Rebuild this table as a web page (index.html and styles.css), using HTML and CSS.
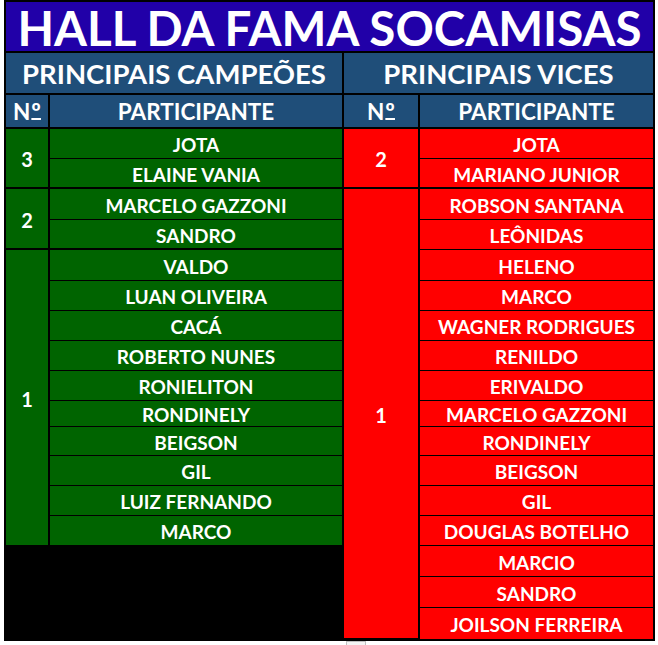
FILE: index.html
```html
<!DOCTYPE html>
<html lang="pt-BR">
<head>
<meta charset="utf-8">
<title>Hall da Fama Socamisas</title>
<link rel="stylesheet" href="styles.css">
</head>
<body>
<div class="board">
  <div class="title">HALL DA FAMA SOCAMISAS</div>
  <div class="sub sub-left">PRINCIPAIS CAMPEÕES</div>
  <div class="sub sub-right">PRINCIPAIS VICES</div>
  <div class="head c1">N<span class="ord">º</span></div>
  <div class="head c2">PARTICIPANTE</div>
  <div class="head c3">N<span class="ord">º</span></div>
  <div class="head c4">PARTICIPANTE</div>

  <div class="num green c1 span2 end">3</div>
  <div class="cell green c2">JOTA</div>
  <div class="num red c3 span2 end">2</div>
  <div class="cell red c4">JOTA</div>

  <div class="cell green c2 end">ELAINE VANIA</div>
  <div class="cell red c4 end">MARIANO JUNIOR</div>

  <div class="num green c1 span2 end">2</div>
  <div class="cell green c2">MARCELO GAZZONI</div>
  <div class="num red c3 span15">1</div>
  <div class="cell red c4">ROBSON SANTANA</div>

  <div class="cell green c2 end">SANDRO</div>
  <div class="cell red c4">LEÔNIDAS</div>

  <div class="num green c1 span10">1</div>
  <div class="cell green c2">VALDO</div>
  <div class="cell red c4">HELENO</div>

  <div class="cell green c2">LUAN OLIVEIRA</div>
  <div class="cell red c4">MARCO</div>

  <div class="cell green c2">CACÁ</div>
  <div class="cell red c4">WAGNER RODRIGUES</div>

  <div class="cell green c2">ROBERTO NUNES</div>
  <div class="cell red c4">RENILDO</div>

  <div class="cell green c2">RONIELITON</div>
  <div class="cell red c4">ERIVALDO</div>

  <div class="cell green c2">RONDINELY</div>
  <div class="cell red c4">MARCELO GAZZONI</div>

  <div class="cell green c2">BEIGSON</div>
  <div class="cell red c4">RONDINELY</div>

  <div class="cell green c2">GIL</div>
  <div class="cell red c4">BEIGSON</div>

  <div class="cell green c2">LUIZ FERNANDO</div>
  <div class="cell red c4">GIL</div>

  <div class="cell green c2">MARCO</div>
  <div class="cell red c4">DOUGLAS BOTELHO</div>

  <div class="cell red c4">MARCIO</div>
  <div class="cell red c4">SANDRO</div>
  <div class="cell red c4 last">JOILSON FERREIRA</div>
</div>
<div class="paste-box"></div>
</body>
</html>
```

FILE: styles.css
```css
* {
  box-sizing: border-box;
}

html, body {
  margin: 0;
  padding: 0;
  background: #ffffff;
}

body {
  font-family: "Lato", "Open Sans", sans-serif;
  font-weight: 700;
  color: #ffffff;
  height: 645px;
  overflow: hidden;
}

.board {
  margin-left: 4px;
  width: fit-content;
  display: grid;
  grid-template-columns: 42px 292px 74px 233px;
  grid-template-rows: 51px 42px 34px 30px 30px 31px 30px 31px 30px 30px 30px 30px 26px 29px 30px 30px 30px 31px 31px 31px;
  column-gap: 2px;
  padding: 2px;
  background: #000000;
}

.title {
  grid-column: 1 / 5;
  grid-row: 1;
  background: #2100a8;
  border-bottom: 2px solid #000;
  display: flex;
  align-items: center;
  justify-content: center;
  font-size: 47.5px;
  padding-top: 1px;
}

.sub {
  grid-row: 2;
  background: #1f4e79;
  border-bottom: 2px solid #000;
  display: flex;
  align-items: center;
  justify-content: center;
  font-size: 27.5px;
  padding-top: 1px;
}

.sub-left {
  grid-column: 1 / 3;
}

.sub-right {
  grid-column: 3 / 5;
}

.head {
  grid-row: 3;
  background: #1f4e79;
  border-bottom: 2px solid #000;
  display: flex;
  align-items: center;
  justify-content: center;
  font-size: 22.5px;
  padding-top: 1px;
}

.ord {
  font-size: 24px;
  margin-left: 1px;
  text-decoration: underline;
  text-decoration-thickness: 2px;
  text-underline-offset: -3px;
}

.c1 { grid-column: 1; }
.c2 { grid-column: 2; }
.c3 { grid-column: 3; }
.c4 { grid-column: 4; }

.span2 { grid-row-end: span 2; }
.span10 { grid-row-end: span 10; }
.span15 { grid-row-end: span 15; }

.num,
.cell {
  display: flex;
  align-items: center;
  justify-content: center;
  border-bottom: 1px solid #000;
  font-size: 19px;
  padding-top: 2px;
}

.num {
  font-size: 20px;
}

.end {
  border-bottom: 2px solid #000;
}

.last {
  border-bottom: 0;
}

.green {
  background: #006400;
}

.red {
  background: #ff0000;
}

.paste-box {
  margin-left: 346px;
  width: 20px;
  height: 12px;
  border: 1px solid #c0c0c0;
  background: #f4f4f4;
}
```
